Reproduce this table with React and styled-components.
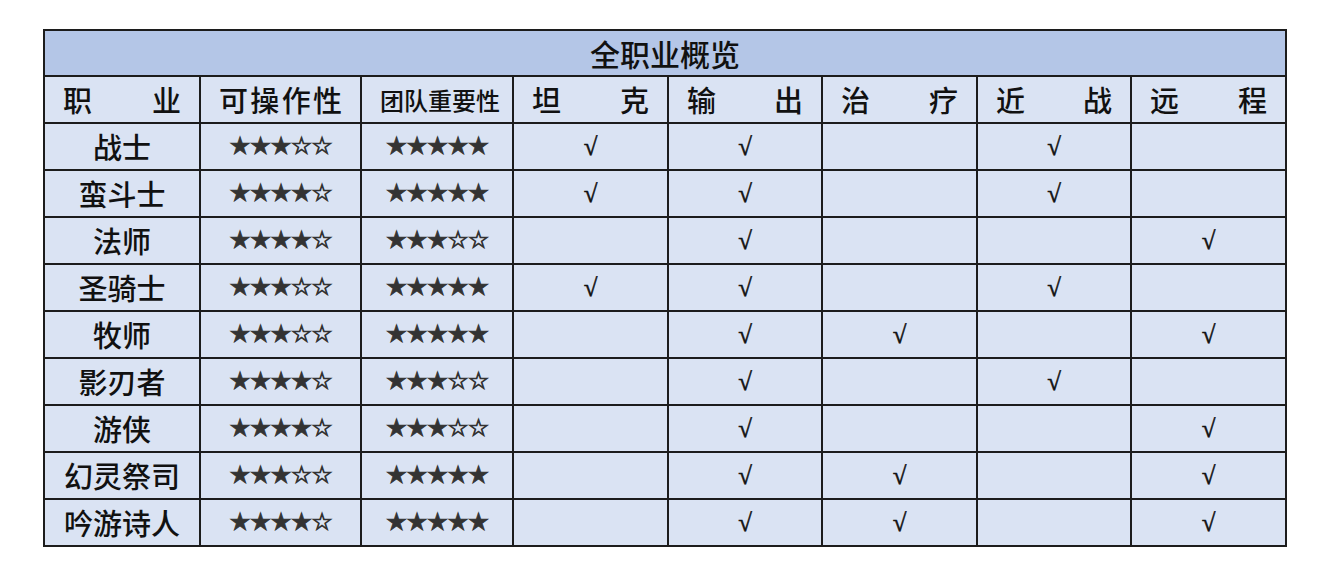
import styled, { createGlobalStyle } from 'styled-components'

const GlobalStyle = createGlobalStyle`
  body {
    margin: 0;
    background: #ffffff;
    font-family: "Noto Sans CJK SC", "Noto Sans", sans-serif;
    color: #111;
  }
`

const Page = styled.div`
  padding: 29px 0 0 43px;
`

const Table = styled.table`
  border-collapse: collapse;
  table-layout: fixed;
  width: 1243px;
  background: #dae3f3;

  td,
  th {
    border: 2px solid #1c1c1c;
    height: 45px;
    padding: 0;
    font-weight: 500;
  }
`

const TitleCell = styled.th`
  background: #b4c6e7;
  font-size: 30px;
  line-height: 44px;
  height: 44px !important;
  text-align: center;
`

const HeadCell = styled.th`
  padding: 0 18px !important;
  font-size: ${({ $size }) => $size || 29}px;
  line-height: 45px;
  text-align: justify;
  text-align-last: justify;
  white-space: nowrap;
`

const NameCell = styled.td`
  font-size: 29px;
  line-height: 45px;
  text-align: center;
`

const StarCell = styled.td`
  font-family: "DejaVu Sans", sans-serif;
  font-size: 24px;
  letter-spacing: -1px;
  line-height: 45px;
  color: #333;
  -webkit-text-stroke: 0.9px #333;
  text-align: center;
`

const CheckCell = styled.td`
  font-family: "Liberation Serif", serif;
  font-weight: 700 !important;
  font-size: 25px;
  line-height: 45px;
  color: #111;
  -webkit-text-stroke: 0.5px #111;
  text-align: center;
`

const widths = [156, 161, 152, 155, 154, 155, 154, 155]

const heads = [
  { text: '职 业' },
  { text: '可操作性' },
  { text: '团队重要性', size: 24 },
  { text: '坦 克' },
  { text: '输 出' },
  { text: '治 疗' },
  { text: '近 战' },
  { text: '远 程' },
]

const rows = [
  ['战士', 3, 5, [1, 1, 0, 1, 0]],
  ['蛮斗士', 4, 5, [1, 1, 0, 1, 0]],
  ['法师', 4, 3, [0, 1, 0, 0, 1]],
  ['圣骑士', 3, 5, [1, 1, 0, 1, 0]],
  ['牧师', 3, 5, [0, 1, 1, 0, 1]],
  ['影刃者', 4, 3, [0, 1, 0, 1, 0]],
  ['游侠', 4, 3, [0, 1, 0, 0, 1]],
  ['幻灵祭司', 3, 5, [0, 1, 1, 0, 1]],
  ['吟游诗人', 4, 5, [0, 1, 1, 0, 1]],
]

const stars = n => '★'.repeat(n) + '☆'.repeat(5 - n)

export default function App() {
  return (
    <Page>
      <GlobalStyle />
      <Table>
        <colgroup>
          {widths.map((w, i) => (
            <col key={i} style={{ width: w }} />
          ))}
        </colgroup>
        <thead>
          <tr>
            <TitleCell colSpan={8}>全职业概览</TitleCell>
          </tr>
          <tr>
            {heads.map(h => (
              <HeadCell key={h.text} $size={h.size}>
                {h.text}
              </HeadCell>
            ))}
          </tr>
        </thead>
        <tbody>
          {rows.map(([name, ease, team, marks]) => (
            <tr key={name}>
              <NameCell>{name}</NameCell>
              <StarCell>{stars(ease)}</StarCell>
              <StarCell>{stars(team)}</StarCell>
              {marks.map((m, i) => (
                <CheckCell key={i}>{m ? '√' : ''}</CheckCell>
              ))}
            </tr>
          ))}
        </tbody>
      </Table>
    </Page>
  )
}
